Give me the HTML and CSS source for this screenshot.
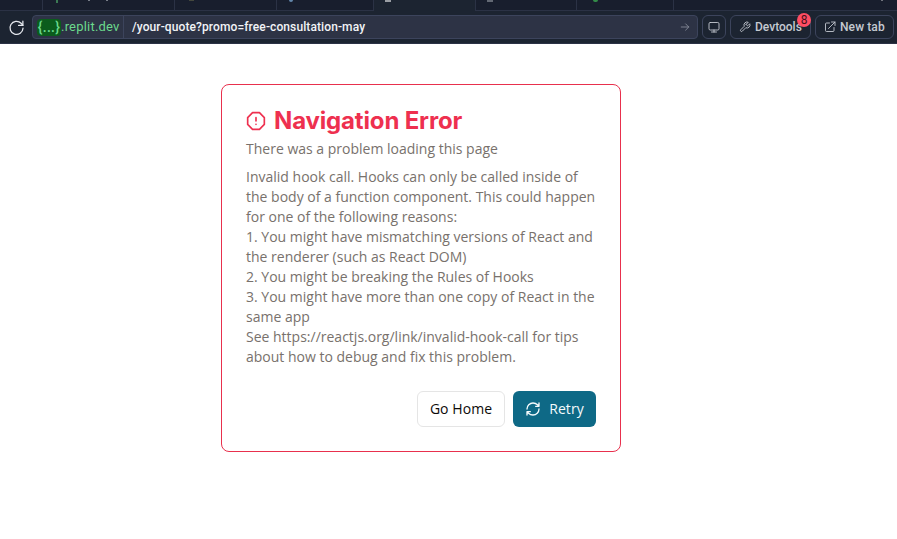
FILE: index.html
```html
<!DOCTYPE html>
<html lang="en">
<head>
<meta charset="utf-8">
<title>Navigation Error</title>
<link rel="stylesheet" href="styles.css">
</head>
<body>
<header class="chrome">
  <div class="tabs">
    <div class="tab t0"></div>
    <div class="tab t1"><i class="mark green bar"></i><i class="mark tail a"></i><i class="mark tail b"></i></div>
    <div class="tab t2"><i class="mark olive"></i></div>
    <div class="tab t3"><i class="mark blue"></i></div>
    <div class="tab t4 active"><i class="mark light"></i></div>
    <div class="tab t5"><i class="mark grey"></i></div>
    <div class="tab t6"><i class="mark green dot"></i></div>
    <div class="tab t7"><i class="mark speck"></i></div>
  </div>
  <div class="toolbar">
    <svg class="reload" viewBox="0 0 24 24"><path d="M21 3v6h-6"/><path d="M21 9 18.5 6A9.2 9.2 0 1 0 21.2 13"/></svg>
    <div class="address">
      <div class="host"><span class="chip">{...}</span><span class="domain">.replit.dev</span></div>
      <div class="path">/your-quote?promo=free-consultation-may</div>
      <svg class="go" viewBox="0 0 24 24"><path d="M3 12h18M13.500 4.500 21 12l-7.500 7.500"/></svg>
    </div>
    <div class="btn monitor"><svg viewBox="0 0 24 24"><rect x="2" y="3" width="20" height="15" rx="2.500"/><path d="M12 18v4M7 22h10"/></svg></div>
    <div class="btn devtools"><svg viewBox="0 0 24 24"><path d="M14.700 6.300a1 1 0 0 0 0 1.400l1.600 1.600a1 1 0 0 0 1.400 0l3.770-3.770a6 6 0 0 1-7.940 7.940l-6.910 6.910a2.120 2.120 0 0 1-3-3l6.910-6.910a6 6 0 0 1 7.940-7.940l-3.760 3.760z"/></svg><span>Devtools</span><b class="badge">8</b></div>
    <div class="btn newtab"><svg viewBox="0 0 24 24"><path d="M11 4H5a2 2 0 0 0-2 2v13a2 2 0 0 0 2 2h13a2 2 0 0 0 2-2v-6M15 2h7v7M9 15 22 2"/></svg><span>New tab</span></div>
  </div>
</header>
<main class="page">
  <section class="card">
    <h1 class="title"><svg viewBox="0 0 24 24"><path d="M7.860 2h8.280L22 7.860v8.280L16.140 22H7.860L2 16.140V7.860zM12 8v4M12 16h.01"/></svg><span>Navigation Error</span></h1>
    <p class="sub">There was a problem loading this page</p>
    <p class="message">Invalid hook call. Hooks can only be called inside of
the body of a function component. This could happen
for one of the following reasons:
1. You might have mismatching versions of React and
the renderer (such as React DOM)
2. You might be breaking the Rules of Hooks
3. You might have more than one copy of React in the
same app
See https://reactjs.org/link/invalid-hook-call for tips
about how to debug and fix this problem.</p>
    <div class="actions">
      <button class="home">Go Home</button>
      <button class="retry"><svg viewBox="0 0 24 24"><path d="M3 12a9 9 0 0 1 9-9 9.750 9.750 0 0 1 6.740 2.740L21 8M21 3v5h-5M21 12a9 9 0 0 1-9 9 9.750 9.750 0 0 1-6.740-2.740L3 16M8 16H3v5"/></svg><span>Retry</span></button>
    </div>
  </section>
</main>
</body>
</html>
```

FILE: styles.css
```css
* { box-sizing: border-box; }
body { margin: 0; height: 539px; overflow: hidden; background: #fff; font-family: "Open Sans", sans-serif; }
svg { fill: none; stroke: currentColor; stroke-width: 2; stroke-linecap: round; stroke-linejoin: round; flex: none; }
.chrome { height: 44px; background: #1c2431; border-bottom: 1px solid #2b3245; }
.tabs { display: flex; height: 11px; }
.tab { position: relative; background: #181e2d; border-right: 1px solid #2b3245; border-bottom: 1px solid #2b3245; overflow: hidden; }
.tab.active { background: none; border-bottom: 0; }
.t0 { width: 43px; }
.t1 { width: 132px; }
.t2 { width: 102px; }
.t3 { width: 97px; }
.t4 { width: 102px; }
.t5 { width: 101px; }
.t6 { width: 97px; }
.t7 { flex: 1; border-right: 0; }
.mark { position: absolute; top: 0; left: 13px; width: 6px; height: 2px; }
.bar { width: 2px; height: 3px; background: #3b7a54; }
.tail { width: 2px; height: 1px; background: #777d88; }
.a { left: 45px; }
.b { left: 63px; }
.olive { left: 14px; width: 5px; height: 1px; background: #44483d; }
.blue { left: 12px; width: 4px; background: #6387aa; border-radius: 0 0 2px 2px; }
.light { left: 11px; background: #9a9ea4; }
.grey { left: 11px; background: #626873; }
.dot { left: 16px; width: 5px; height: 2px; background: #338c48; border-radius: 0 0 2px 2px; }
.speck { left: 207px; width: 2px; height: 1px; background: #70747d; }
.toolbar { display: flex; align-items: center; height: 32px; padding: 0 3px 0 8px; font: 500 12px/24px Roboto, sans-serif; color: #c5cad1; }
.reload { width: 17px; height: 17px; margin-right: 7px; color: #e5e8ee; stroke-width: 1.8; }
.address { display: flex; align-items: center; width: 666px; height: 24px; background: #2d3345; border: 1px solid #3c445c; border-radius: 4px; margin-right: 4px; }
.host { display: flex; align-items: center; width: 91px; height: 22px; padding-left: 4px; border-right: 1px solid #3c445c; color: #6bd98c; font-size: 13px; }
.chip { width: 24px; height: 17px; line-height: 16px; text-align: center; background: #0b5c1c; border-radius: 4px; font-size: 14px; letter-spacing: .3px; }
.domain { font-weight: 400; letter-spacing: .2px; }
.path { padding-left: 8px; color: #f2f4f7; flex: 1; letter-spacing: .1px; }
.go { width: 10px; height: 10px; margin-right: 7px; color: #8c919e; }
.btn { position: relative; display: flex; align-items: center; height: 24px; border: 1px solid #3c445c; border-radius: 6px; }
.btn svg { width: 12px; height: 12px; stroke-width: 1.8; }
.monitor { width: 24px; justify-content: center; margin-right: 4px; }
.devtools { width: 81px; padding-left: 8px; gap: 4px; margin-right: 4px; }
.newtab { width: 79px; padding-left: 8px; gap: 4px; letter-spacing: .1px; }
.badge { position: absolute; right: -1px; top: -3px; width: 14px; height: 14px; border-radius: 50%; background: #ff4d63; color: #4a1019; font: 400 12px/14px Roboto, sans-serif; text-align: center; }
.card { width: 400px; height: 368px; margin: 40px 0 0 221px; padding: 20px 24px 24px; border: 1px solid #e8304d; border-radius: 8px; }
.title { display: flex; align-items: center; gap: 8px; height: 32px; margin: 0; color: #ee304f; font: 700 24px/32px Inter, sans-serif; letter-spacing: -.16px; white-space: nowrap; }
.title svg { width: 20px; height: 20px; }
.sub { margin: 2px 0 8px; font-size: 14px; line-height: 20px; color: #78716c; }
.message { margin: 0; font-size: 14px; line-height: 20px; color: #78716c; white-space: pre; }
.actions { display: flex; justify-content: flex-end; gap: 8px; margin-top: 24px; }
button { display: flex; align-items: center; justify-content: center; height: 36px; padding: 0; border-radius: 6px; font: 500 14px/20px "Open Sans", sans-serif; letter-spacing: .06px; }
.home { width: 88px; background: #fff; border: 1px solid #e5e5e5; color: #0c0a09; }
.retry { width: 83px; gap: 8px; background: #0e6986; border: 0; color: #f5fafc; }
.retry svg { width: 16px; height: 16px; }
```
